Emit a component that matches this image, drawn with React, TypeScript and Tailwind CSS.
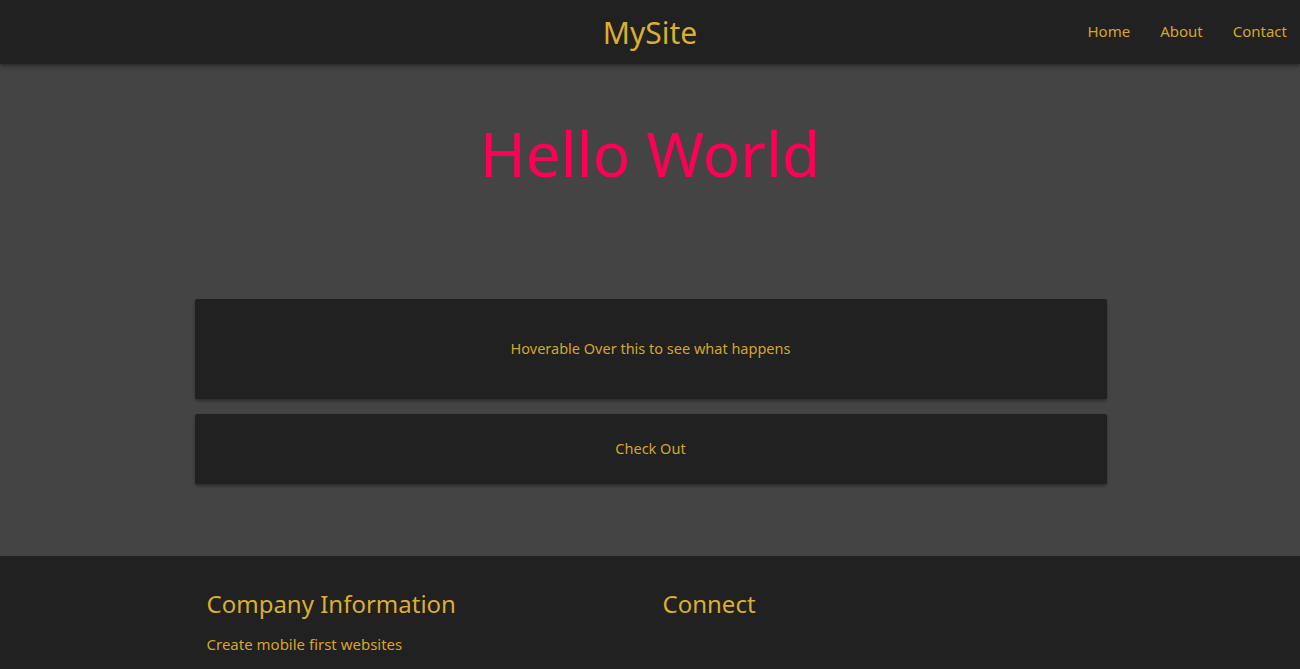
export default function App() {
  return (
    <div className="min-h-screen bg-[#444444] font-['Noto_Sans',sans-serif] text-[#d4a62a]">
      <header className="relative z-10 h-16 bg-[#212121] shadow-[0_2px_4px_rgba(0,0,0,0.4)] flex items-center justify-center">
        <h2 className="text-[30px] text-[#dcae2e]">MySite</h2>
        <nav className="absolute right-[13px] top-0 h-[62px] flex items-center gap-[30px] text-[15px]">
          <a>Home</a>
          <a>About</a>
          <a>Contact</a>
        </nav>
      </header>
      <main className="pb-[72px]">
        <div className="h-[235px] flex justify-center pt-[58px]">
          <h1 className="text-[62px] leading-none text-[#ff0055]">Hello World</h1>
        </div>
        <div className="w-[913px] mx-auto pl-px flex flex-col gap-[15px] text-[14.5px]">
          <div className="h-[100px] bg-[#212121] rounded-[2px] shadow-[0_2px_3px_rgba(0,0,0,0.35)] flex items-center justify-center">
            Hoverable Over this to see what happens
          </div>
          <div className="h-[70px] bg-[#212121] rounded-[2px] shadow-[0_2px_3px_rgba(0,0,0,0.35)] flex items-center justify-center">
            Check Out
          </div>
        </div>
      </main>
      <footer className="bg-[#212121] pt-[30px] pb-6">
        <div className="w-[913px] mx-auto pl-px grid grid-cols-2">
          <div className="px-3">
            <h3 className="text-[24px] text-[#dcae2e]">Company Information</h3>
            <p className="mt-[11px] text-[15px]">Create mobile first websites</p>
          </div>
          <div className="px-3">
            <h3 className="text-[24px] text-[#dcae2e]">Connect</h3>
          </div>
        </div>
      </footer>
    </div>
  );
}
